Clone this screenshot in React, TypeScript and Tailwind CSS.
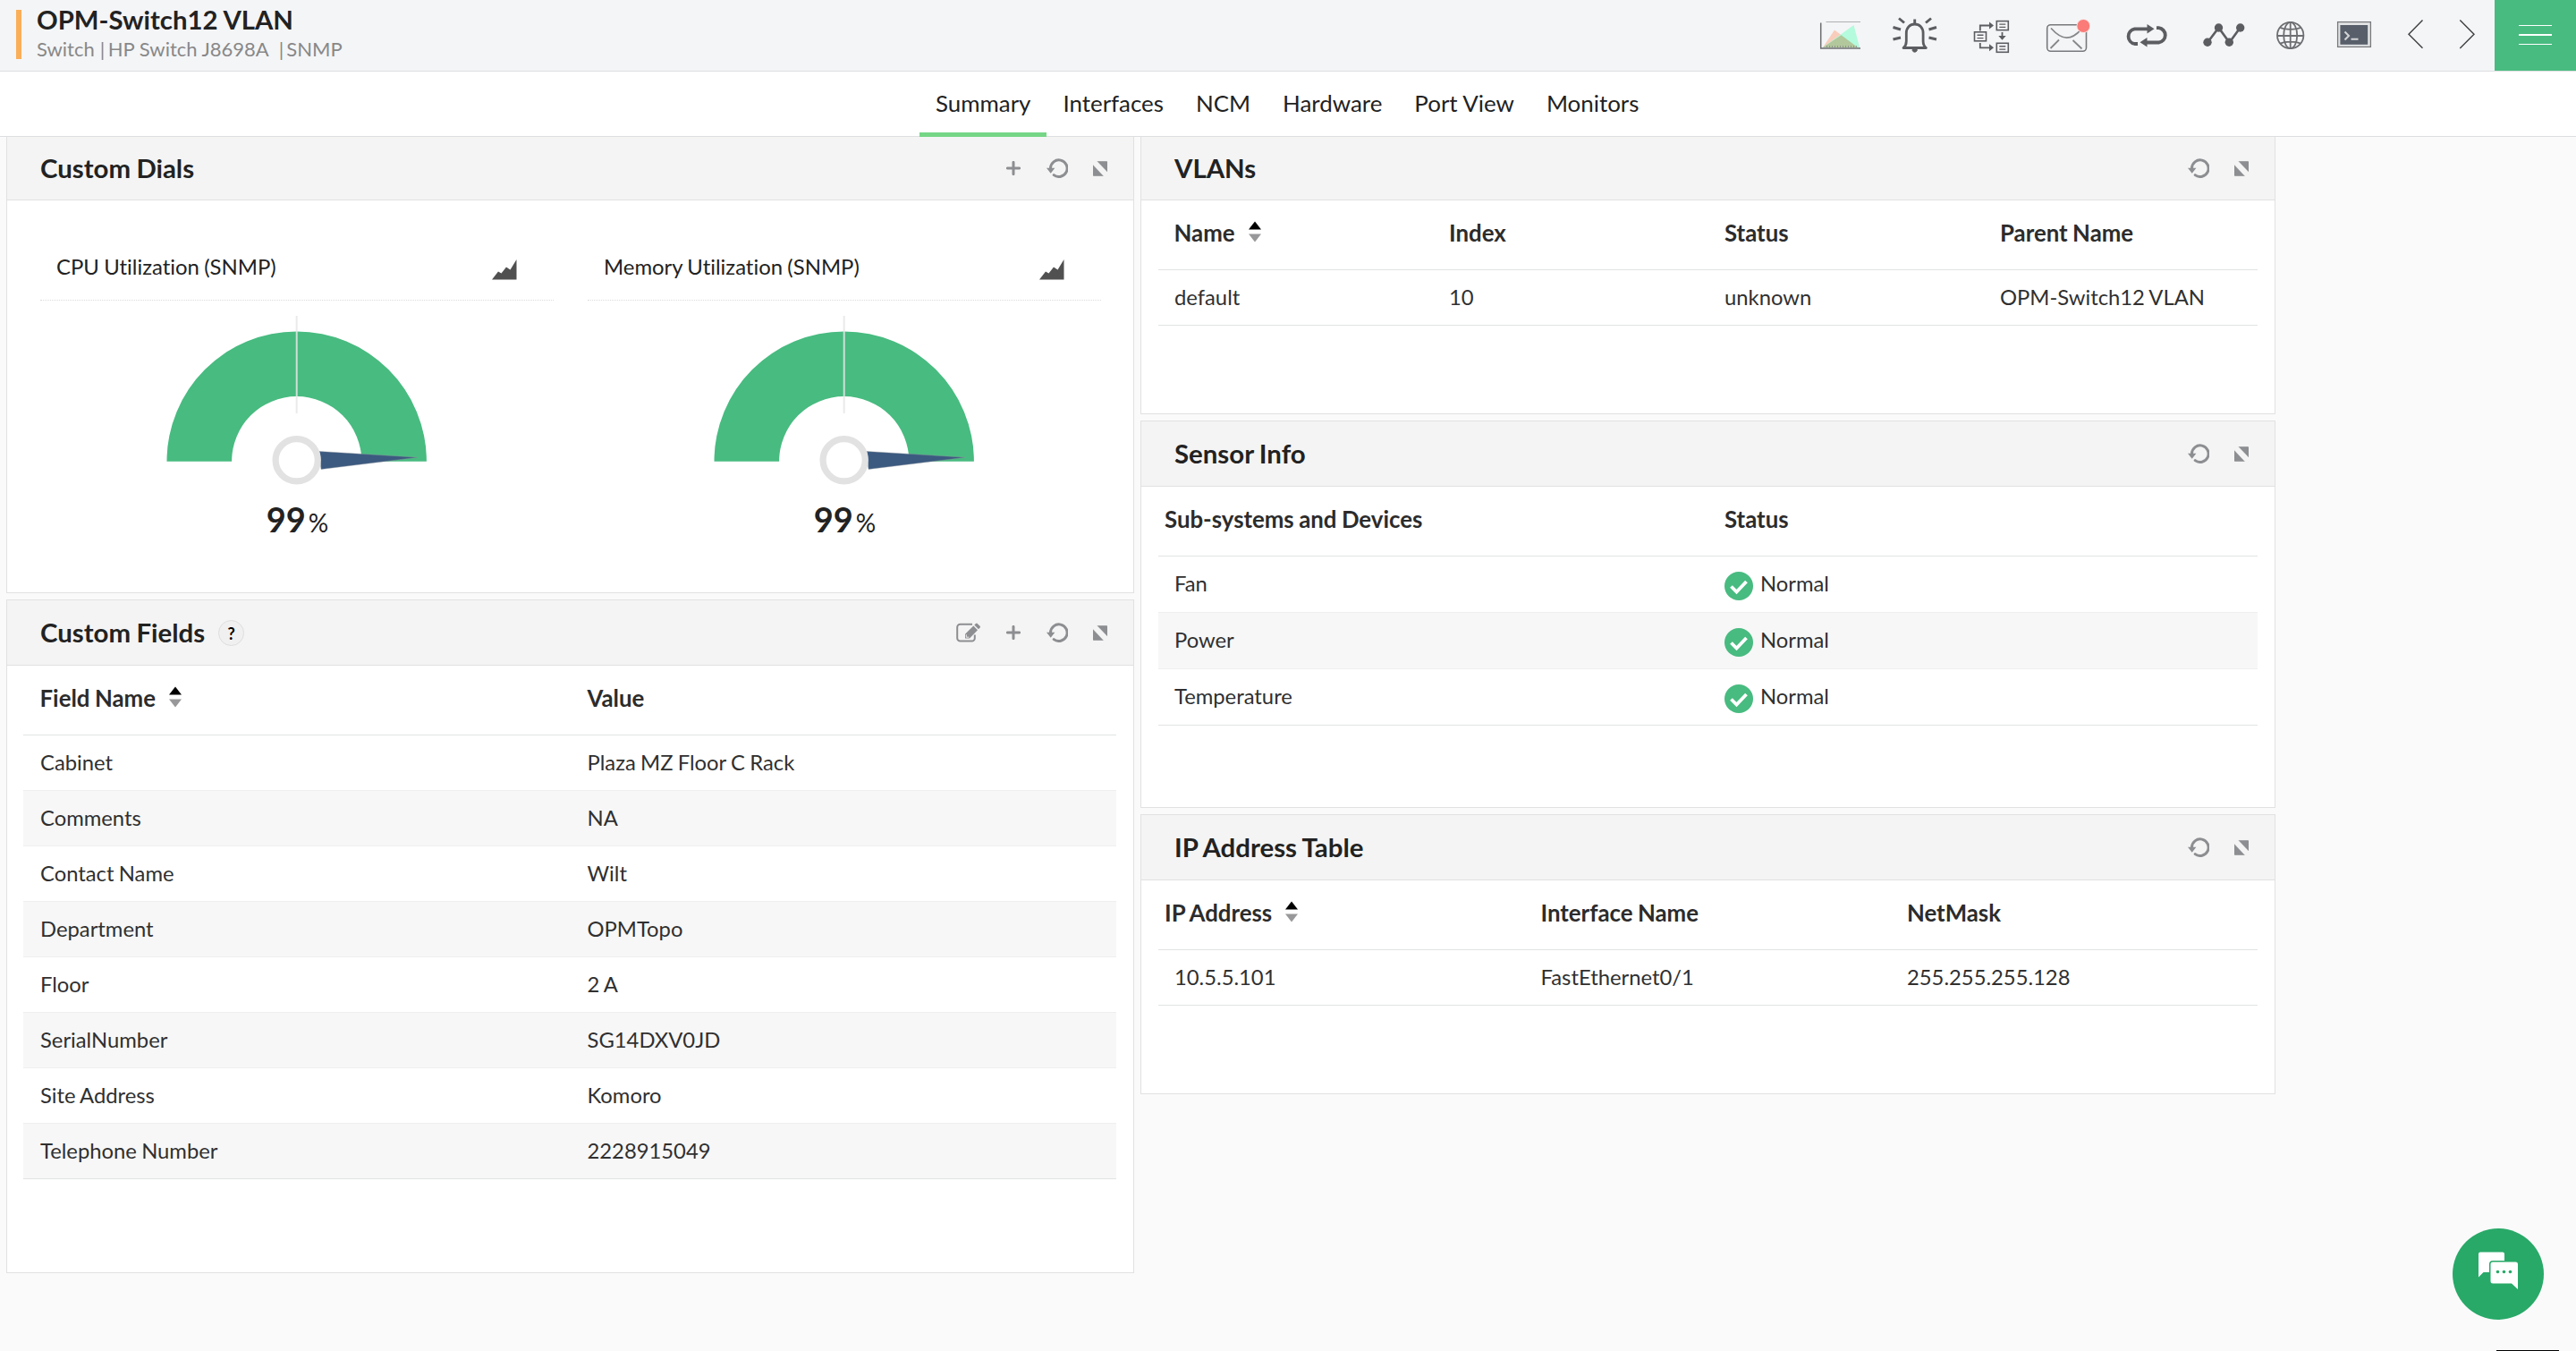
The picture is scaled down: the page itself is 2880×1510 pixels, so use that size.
import type { ReactNode } from "react";

const INK = "#5b5d61";

/* Toolbar icons: each one fills the full height of the top bar. */
function BarIcon({ x, w, children }: { x: number; w: number; children: ReactNode }) {
  return (
    <svg width={w} height={79} viewBox={`${x} 0 ${w} 79`} fill="none" className="shrink-0">
      {children}
    </svg>
  );
}

function FlowBox({ x, y }: { x: number; y: number }) {
  return (
    <g>
      <rect x={x} y={y} width={13} height={10} stroke={INK} strokeWidth={1.6} fill="#f7f7f9" />
      <path d={`M${x + 3} ${y + 3.5}h7M${x + 3} ${y + 6.8}h7`} stroke={INK} strokeWidth={1.4} />
    </g>
  );
}

function Toolbar() {
  return (
    <div className="flex h-full">
      <BarIcon x={2030} w={68}>
        <path d="M2038 53 2051 33.5 2077 53Z" fill="#f9cdbb" />
        <path d="M2038 53 2072.5 28 2079 53Z" fill="#b3fbdc" />
        <path d="M2038 53 2058.5 39.2 2077 53Z" fill="#b2c79c" />
        <path d="M2041.5 24.5H2080" stroke="#aeb0b2" strokeWidth={1} />
        <path d="M2035.7 25.5V54H2080" stroke="#6b6d70" strokeWidth={1.5} />
        <path d="M2042 52h36" stroke="#6b6d70" strokeWidth={1} strokeDasharray="1 2" />
      </BarIcon>
      <BarIcon x={2098} w={88}>
        <path d="M2128 53.5c2.500-2 3.300-4 3.300-7.500V37c0-6 4-10 9.400-10s9.400 4 9.400 10v9c0 3.500.8 5.500 3.300 7.500Z" stroke={INK} strokeWidth={2.8} strokeLinejoin="round" />
        <path d="M2138 55.500h5.400c0 3.500-5.400 3.500-5.400 0Z" fill={INK} stroke={INK} />
        <path d="M2140.700 21.500v5M2123 20.500l6 5M2159 20.500l-6 5M2116.500 30.500l8.500 2.500M2165 30.500l-8.500 2.500M2116.500 44l8.500-2M2165 44l-8.500-2" stroke={INK} strokeWidth={2.9} />
      </BarIcon>
      <BarIcon x={2186} w={81}>
        <FlowBox x={2207.5} y={35.8} />
        <FlowBox x={2232.3} y={23.6} />
        <FlowBox x={2232.3} y={48.3} />
        <path d="M2213.800 34.500V28.500H2225M2213.800 48V53.300H2225M2238.500 36v5" stroke={INK} strokeWidth={1.8} />
        <path d="M2224 24.500l5 4-5 4ZM2224 49.300l5 4-5 4ZM2234.300 40h8.400l-4.200 4.800Z" fill={INK} />
      </BarIcon>
      <BarIcon x={2267} w={87}>
        <rect x={2288.7} y={27.7} width={43.8} height={29.6} rx={4} stroke="#77797c" strokeWidth={1.6} />
        <path d="M2293 31.500c5 5.500 10.500 10.700 17.600 10.700s12-4.500 16-9M2302 44.500l-9.500 9.500M2317.500 45l10 9.500" stroke="#85878a" strokeWidth={1.8} />
        <circle cx={2329.3} cy={29} r={7.8} fill="#fbdedd" />
        <circle cx={2329.3} cy={29} r={6.9} fill="#fa7b78" />
      </BarIcon>
      <BarIcon x={2354} w={90}>
        <path d="M2403 32.300H2386.500a8.500 8.500 0 0 0 0 16.700H2390" stroke={INK} strokeWidth={3.8} />
        <path d="M2397 47.500H2413.500a8.200 8.200 0 0 0 0-16.300H2411" stroke={INK} strokeWidth={3.8} />
        <path d="M2400.500 27l8 5.300-8 5.300ZM2400.500 42l-8 5.300 8 5.300Z" fill={INK} />
      </BarIcon>
      <BarIcon x={2444} w={83}>
        <path d="M2468 47.500 2480.500 31 2492.500 47.500 2504.500 31" stroke={INK} strokeWidth={2.6} />
        <circle cx={2468} cy={47.3} r={4.7} fill={INK} />
        <circle cx={2480.5} cy={31} r={4.7} fill={INK} />
        <circle cx={2492.3} cy={47.3} r={4.7} fill={INK} />
        <circle cx={2504.7} cy={31} r={4.7} fill={INK} />
      </BarIcon>
      <BarIcon x={2527} w={67}>
        <g stroke="#6c6e71" strokeWidth={1.8}>
          <circle cx={2560.7} cy={39.5} r={14.7} />
          <ellipse cx={2560.7} cy={39.5} rx={7.5} ry={14.7} />
          <path d="M2560.700 24.800v29.400M2546 40h29.400M2549 30.800c6 2.700 17.400 2.700 23.400 0M2549 48.700c6-2.700 17.400-2.700 23.400 0" />
        </g>
      </BarIcon>
      <BarIcon x={2594} w={77}>
        <rect x={2613.6} y={24.6} width={36.8} height={27.8} fill="#e3e4e6" stroke="#77797c" strokeWidth={1.3} />
        <rect x={2616.4} y={28} width={30.8} height={21.8} fill="#585f6b" />
        <path d="M2621.500 35.500l4.500 4.500-4.500 4.500M2628.500 43.700h8" stroke="#d3d4d6" strokeWidth={2} />
      </BarIcon>
      <BarIcon x={2671} w={58}>
        <path d="M2708.500 22.500 2693 38.300 2708.500 53.700" stroke="#3e3e3e" strokeWidth={1.4} />
      </BarIcon>
      <BarIcon x={2729} w={60}>
        <path d="M2750.300 22.500 2766 38.300 2750.300 54" stroke="#3e3e3e" strokeWidth={1.4} />
      </BarIcon>
      <div className="flex w-[91px] flex-col bg-[#48bb80] pt-7 pl-[27px]">
        <div className="h-px w-[37px] bg-white" />
        <div className="mt-[9px] h-0.5 w-[37px] bg-white" />
        <div className="mt-[9px] h-px w-[37px] bg-white" />
      </div>
    </div>
  );
}

/* Panel header controls */
const GREY = "#8d8e91";

const PlusIcon = () => (
  <svg width={16} height={16} viewBox="0 0 16 16">
    <path d="M8 1.400v13.200M1.400 8h13.200" stroke={GREY} strokeWidth={3} strokeLinecap="round" />
  </svg>
);

const ReloadIcon = () => (
  <svg width={24} height={22} viewBox="0 0 24 22" fill="none">
    <path d="M4.500 11A9.300 9.300 0 1 1 8.200 18.600" stroke={GREY} strokeWidth={3} strokeLinecap="round" />
    <path d="M0 10.800h9.400l-4.700 5.900Z" fill={GREY} />
  </svg>
);

const ExpandIcon = () => (
  <svg width={16} height={17} viewBox="0 0 16 17" fill={GREY}>
    <path d="M4.800.300h10.200q1 0 1 1v10.700ZM0 4.500 11.500 16.700H1q-1 0-1-1Z" stroke={GREY} strokeWidth={0.3} />
  </svg>
);

const EditIcon = () => (
  <svg width={27} height={22} viewBox="0 0 27 22" fill="none">
    <path d="M18 1.800H4.500a3.300 3.300 0 0 0-3.300 3.300v12.200a3.300 3.300 0 0 0 3.300 3.300h13a3.300 3.300 0 0 0 3.300-3.300v-3.800" stroke={GREY} strokeWidth={2} />
    <path d="M10 17.500V12.800L19.300 3.600 24 8.300 15 17.500Z" fill={GREY} />
    <path d="M20.300 2.600 22 .900q.8-.8 1.700 0l2.900 2.900q.8.900 0 1.700L25 7.200Z" fill={GREY} />
    <path d="M11.300 13.200v3M11.300 16.200h3" stroke="#f4f4f4" strokeWidth={0.9} />
  </svg>
);

const CheckIcon = () => (
  <svg width={32} height={32} viewBox="0 0 32 32" fill="none" className="mr-2 translate-y-[2px]">
    <circle cx={16} cy={16} r={16} fill="#48bb80" />
    <path d="M7.500 16.500l6 6 11-11.500" stroke="#fff" strokeWidth={3.8} />
  </svg>
);

const SortArrows = () => (
  <svg width={14} height={24} viewBox="0 0 14 24" className="ml-[15px] -translate-y-[2px]">
    <path d="M7 .500 14 9.500H0Z" fill="#000" />
    <path d="M7 23.500 14 14.500H0Z" fill="#98989a" />
  </svg>
);

interface PanelProps {
  title: string;
  className: string;
  first?: boolean;
  help?: boolean;
  edit?: boolean;
  add?: boolean;
  children: ReactNode;
}

function Panel({ title, className, first, help, edit, add, children }: PanelProps) {
  return (
    <section className={`border-x border-b border-[#e1e1e1] bg-white ${first ? "" : "border-t"} ${className}`}>
      <header className={`flex items-center border-b border-[#e1e1e1] bg-[#f4f4f4] pr-[29px] pl-[37px] ${first ? "h-[71px]" : "h-[73px]"}`}>
        <h2 className="text-[29.4px] leading-9 font-bold text-[#222]">{title}</h2>
        {help && (
          <span className="ml-[15px] flex size-[29px] items-center justify-center rounded-full border border-[#dedede] bg-[#f0f0f0] pt-px text-lg font-bold text-black">
            ?
          </span>
        )}
        <div className="ml-auto flex items-center">
          {edit && <EditIcon />}
          {add && <span className="ml-[29px]"><PlusIcon /></span>}
          <span className="ml-[29px]"><ReloadIcon /></span>
          <span className="ml-7"><ExpandIcon /></span>
        </div>
      </header>
      {children}
    </section>
  );
}

interface TableProps {
  cols: string;
  heads: string[];
  rows: ReactNode[][];
  rowHeight: string;
  headPad: string;
  cellPad: string;
  sort?: boolean;
}

function DataTable({ cols, heads, rows, rowHeight, headPad, cellPad, sort }: TableProps) {
  return (
    <div className="mr-[19px]">
      <div className={`grid h-[78px] items-center border-b border-[#e1e3e3] pb-1 text-[25.8px] font-bold text-[#2c2c2c] ${cols}`}>
        {heads.map((h, i) => (
          <div key={h} className={`flex items-center ${i === 0 ? headPad : ""}`}>
            {h}
            {sort && i === 0 && <SortArrows />}
          </div>
        ))}
      </div>
      {rows.map((r, n) => (
        <div
          key={n}
          className={`grid items-center border-b text-[23.8px] leading-none text-[#303030] ${rowHeight} ${cols} ${n % 2 ? "bg-[#f7f7f7]" : ""} ${n === rows.length - 1 ? "border-[#e1e3e3]" : "border-[#efefef]"}`}
        >
          {r.map((c, i) => (
            <div key={i} className={`flex items-center ${i === 0 ? cellPad : ""}`}>{c}</div>
          ))}
        </div>
      ))}
    </div>
  );
}

function Dial({ label }: { label: string }) {
  return (
    <div className="w-[574px]">
      <div className="flex h-[112px] items-end justify-between border-b border-dotted border-[#dcdcdc] pr-[41px] pb-[21px] pl-[18px]">
        <span className="mb-[2px] text-[23.9px] leading-[29px] text-[#222]">{label}</span>
        <svg width={28} height={23} viewBox="0 0 28 23" className="mb-px">
          <path d="M0 22.500 7 13.500l3.500 2L16 8.500l4.500 3L27.500 0v22.500Z" fill="#505050" />
        </svg>
      </div>
      <svg width={574} height={210} viewBox="45 336 574 210" className="block">
        <path d="M186.500 515.700a145.200 145.200 0 0 1 290.400 0H404.300a72.600 72.600 0 0 0-145.200 0Z" fill="#48bb80" />
        <path d="M331.700 353v109" stroke="#e6e6e6" strokeOpacity={0.85} strokeWidth={2} />
        <path d="M357 504.500 467 511.200 359 524.500Z" fill="#3c5a80" stroke="#8f979c" strokeOpacity={0.5} strokeWidth={0.8} />
        <circle cx={331.7} cy={514.3} r={23.6} fill="#fff" stroke="#e2e2e2" strokeWidth={7.2} />
      </svg>
      <div className="flex items-baseline justify-center pt-[11px] pl-px leading-[46px] text-[#222]">
        <span className="text-[38px] font-bold">99</span>
        <span className="ml-[3px] text-[28px]">%</span>
      </div>
    </div>
  );
}

const normal = (
  <>
    <CheckIcon />
    Normal
  </>
);

const tabs = ["Summary", "Interfaces", "NCM", "Hardware", "Port View", "Monitors"];

export default function App() {
  return (
    <div className="relative flex h-[1510px] w-[2880px] flex-col overflow-hidden bg-[#fafafa] font-['Lato',sans-serif] [font-variant-ligatures:none]">
      <header className="flex h-20 justify-between border-b border-[#dcdee0] bg-[#f4f5f7]">
        <div className="flex pt-[11px] pl-[18px]">
          <div className="h-[55px] w-1.5 bg-[#fbae58]" />
          <div className="ml-[17px]">
            <h1 className="-mt-[7px] text-[29.3px] leading-9 font-bold text-[#222]">OPM-Switch12 VLAN</h1>
            <div className="mt-[2px] flex text-[22px] leading-[26px] text-[#888]">
              <span>Switch</span>
              <span className="ml-[6px]">|</span>
              <span className="ml-[3.5px]">HP Switch J8698A</span>
              <span className="ml-[11px]">|</span>
              <span className="ml-[3px]">SNMP</span>
            </div>
          </div>
        </div>
        <Toolbar />
      </header>

      <nav className="flex h-[73px] border-b border-[#dcdee0] bg-white pl-[1028px]">
        {tabs.map((t, i) => (
          <div
            key={t}
            className={`flex h-[73px] items-center border-b-[5px] px-[18px] pt-[3px] text-[25.9px] text-[#222] ${i === 0 ? "border-[#75d685]" : "border-transparent"}`}
          >
            {t}
          </div>
        ))}
      </nav>

      <main className="flex items-start gap-[7px] pl-[7px] [word-spacing:-0.05em]">
        <div className="flex w-[1261px] flex-col gap-[7px]">
          <Panel title="Custom Dials" className="h-[510px]" first add>
            <div className="flex gap-[38px] pl-[37px]">
              <Dial label="CPU Utilization (SNMP)" />
              <Dial label="Memory Utilization (SNMP)" />
            </div>
          </Panel>
          <Panel title="Custom Fields" className="h-[753px]" help edit add>
            <div className="pl-[18px]">
              <DataTable
                sort
                cols="grid-cols-[630.5px_1fr]"
                heads={["Field Name", "Value"]}
                headPad="pl-[18.5px]"
                cellPad="pl-[19px]"
                rowHeight="h-[62px]"
                rows={[
                  ["Cabinet", "Plaza MZ Floor C Rack"],
                  ["Comments", "NA"],
                  ["Contact Name", "Wilt"],
                  ["Department", "OPMTopo"],
                  ["Floor", "2 A"],
                  ["SerialNumber", "SG14DXV0JD"],
                  ["Site Address", "Komoro"],
                  ["Telephone Number", "2228915049"],
                ]}
              />
            </div>
          </Panel>
        </div>

        <div className="flex w-[1269px] flex-col gap-[7px]">
          <Panel title="VLANs" className="h-[310px]" first>
            <div className="pl-[19px]">
              <DataTable
                sort
                cols="grid-cols-[325px_308px_308px_1fr]"
                heads={["Name", "Index", "Status", "Parent Name"]}
                headPad="pl-[17.5px]"
                cellPad="pl-[18px]"
                rowHeight="h-[62px]"
                rows={[["default", "10", "unknown", "OPM-Switch12 VLAN"]]}
              />
            </div>
          </Panel>
          <Panel title="Sensor Info" className="h-[433px]">
            <div className="pl-[19px]">
              <DataTable
                cols="grid-cols-[633px_1fr]"
                heads={["Sub-systems and Devices", "Status"]}
                headPad="pl-[7px]"
                cellPad="pl-[18px]"
                rowHeight="h-[63px]"
                rows={[
                  ["Fan", normal],
                  ["Power", normal],
                  ["Temperature", normal],
                ]}
              />
            </div>
          </Panel>
          <Panel title="IP Address Table" className="h-[313px]">
            <div className="pl-[19px]">
              <DataTable
                sort
                cols="grid-cols-[427.5px_409.5px_1fr]"
                heads={["IP Address", "Interface Name", "NetMask"]}
                headPad="pl-[7px]"
                cellPad="pl-[18px]"
                rowHeight="h-[62px]"
                rows={[["10.5.5.101", "FastEthernet0/1", "255.255.255.128"]]}
              />
            </div>
          </Panel>
        </div>
      </main>

      {/* Floating chat button */}
      <button className="absolute right-9 bottom-[35px] size-[102px] rounded-full bg-[#28a968]">
        <svg width={102} height={102} viewBox="0 0 102 102" fill="#fff">
          <path d="M31 26.500h25q2 0 2 2v7.500H45q-4 0-4 4v9h-6.500L29 54.500V28.500q0-2 2-2Z" />
          <path d="M45 37.500h25.500q2.500 0 2.500 2.500v28l-7-6.500H45q-2.500 0-2.500-2.500V40q0-2.500 2.500-2.500Z" />
          <g fill="#28a968">
            <circle cx={50.5} cy={48.5} r={1.8} />
            <circle cx={57.5} cy={48.5} r={1.8} />
            <circle cx={64.5} cy={48.5} r={1.8} />
          </g>
        </svg>
      </button>
      <div className="absolute right-[19px] bottom-0 h-px w-[70px] bg-black" />
    </div>
  );
}
